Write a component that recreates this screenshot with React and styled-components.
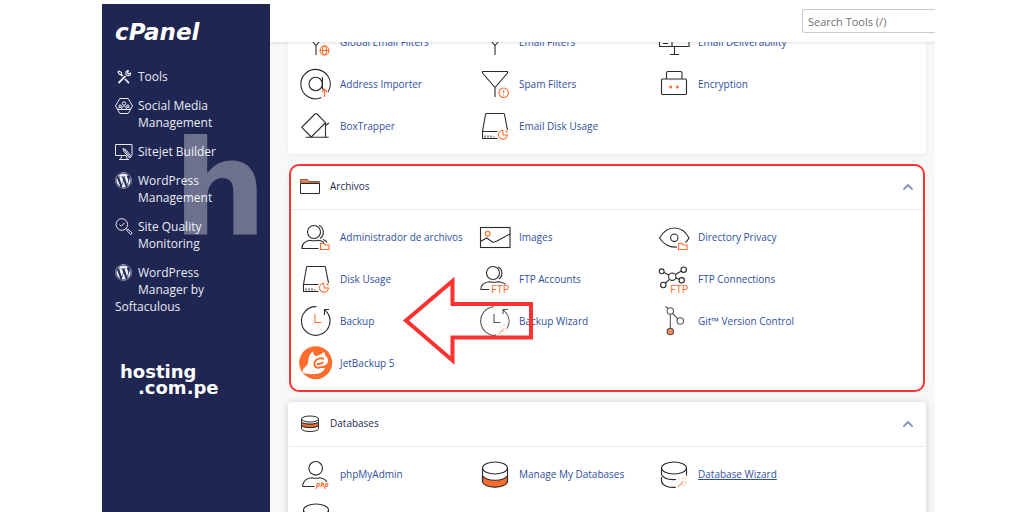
import React from 'react';
import styled, { createGlobalStyle } from 'styled-components';
import { ChevronUp } from 'lucide-react';
import { FaWordpress } from 'react-icons/fa';

const GlobalStyle = createGlobalStyle`
  :root {
    --navy: #1f2652;
    --ink: #2b2b2b;
    --orange: #ff6c2c;
    --link: #2f4f9f;
    --mark: #ff3131;
  }
  * {
    box-sizing: border-box;
  }
  body {
    margin: 0;
    background: #ffffff;
    font-family: "Open Sans", "Noto Sans", sans-serif;
  }
`;

/* tool icons, all on a 34px grid */

const Funnel = () => <path d="M4.500 6V4.500h25V6L17 20.500 4.500 6M17 20.500v9.500" />;

const FolderBadge = () => (
  <path className="accent" d="M21.500 29.500v-6h3.500l1 1.500h4v4.500z" />
);

const WandBadge = () => (
  <g className="accent" strokeWidth="1">
    <path d="M20.500 30l6-6" />
    <path
      strokeDasharray="1 1.500"
      d="M22 22.500l1.500 1.500M26 20.500v2M29.500 21l-1.500 1.500M28 25.500h2.500M27.500 28l1.500 1.500M25 27v2"
    />
  </g>
);

const User = () => (
  <g>
    <circle cx="15" cy="12" r="6.500" />
    <path d="M20 5.500c5 2 6 9.500 1 13M24 19.500c2 .5 3.500 1.500 4 3" />
    <path d="M19.500 28.500H3c-.5-5 4-8 8.500-8.300 3 .8 5 .8 8 0 2.500.2 4 1 5.500 2.300" />
  </g>
);

const Disk = () => (
  <g>
    <path d="M19.500 22.500h-15v7h15M4.500 22.500L7.500 5.500q.2-1 1-1h17q.8 0 1 1l3 15.500" />
    <path d="M7 28.500v-2M10 28.500v-2M13 28.500v-2M16 28.500v-1" />
    <path className="accent" d="M24.500 21.200a4.500 4.500 0 1 0 5 4.800h-4.200zM27.500 21.500l2 2" />
  </g>
);

const Ftp = () => (
  <text className="label" x="13" y="31" fontSize="11">FTP</text>
);

const ICONS = {
  globalFilters: (
    <g>
      <Funnel />
      <g className="accent">
        <circle cx="25.500" cy="25.500" r="4.500" />
        <ellipse cx="25.500" cy="25.500" rx="2" ry="4.500" />
        <path d="M21 25.500h9" />
      </g>
    </g>
  ),
  filters: <Funnel />,
  deliverability: (
    <g>
      <path d="M2.500 21.500v-17H32v17zM15 4.500v17M6 18.500h5M17.500 21.500v8M13 29.500h9" />
    </g>
  ),
  address: (
    <g>
      <path d="M22.500 30.600a14.700 14.700 0 1 1 6.500-5.600" />
      <circle cx="16.700" cy="17" r="6.700" />
      <path d="M23.400 10v10.500c0 1.500 1 2.500 2.500 2" />
      <path className="accent" d="M25.500 30v-7.500M22.800 25l2.700-2.700 2.700 2.700" />
    </g>
  ),
  spam: (
    <g>
      <Funnel />
      <g className="accent">
        <circle cx="25.700" cy="25.700" r="4.700" />
        <path d="M25.700 23v3M25.700 27.500v1" />
      </g>
    </g>
  ),
  encryption: (
    <g>
      <rect x="4.500" y="12" width="25" height="15.500" rx="1" />
      <path d="M9.500 12V6q0-1.500 1.500-1.500h12.500q1.500 0 1.500 1.500v6" />
      <circle className="fill" cx="13.700" cy="20" r="1.500" />
      <circle className="fill" cx="20.300" cy="20" r="1.500" />
    </g>
  ),
  boxtrapper: (
    <path d="M12.300 28L2.700 18.300 16 5q1-1 2 0l8.500 8.700zM6.700 28.200h23M26.500 13.700v14.500M26.500 16.500l3.500-2.500" />
  ),
  disk: <Disk />,
  userFolder: (
    <g>
      <User />
      <FolderBadge />
    </g>
  ),
  images: (
    <g>
      <rect x="2.500" y="7.500" width="29.500" height="20" />
      <path d="M2.500 21.500l6.200-3.500 6.300 4.500 4-1.500 13-7" />
      <circle className="accent" cx="9.700" cy="13.800" r="2.400" />
    </g>
  ),
  eye: (
    <g>
      <path d="M20 27c-7.500 1-14-3.500-17.500-9C6 12 11 8 17.300 8S29 12 32 18c-1 1.800-2 3-3.500 4.500" />
      <circle cx="17.300" cy="17.700" r="3.700" />
      <FolderBadge />
    </g>
  ),
  userFtp: (
    <g>
      <circle cx="15" cy="11" r="6.500" />
      <path d="M20 5c4.500 2 5.500 8.500 1 12M11 27.500H3c-.5-5 4-7.500 8.500-7.800 3 .8 5 .8 8 0 4 .2 6.500 1 8 2.800" />
      <Ftp />
    </g>
  ),
  network: (
    <g>
      <circle cx="15.300" cy="14.700" r="3.700" />
      <circle cx="4.700" cy="9.300" r="2.400" />
      <circle cx="26.700" cy="7.700" r="2.700" />
      <circle cx="24.700" cy="18.300" r="2.700" />
      <circle cx="6.300" cy="23" r="2.700" />
      <path d="M7 10.500l5 2.500M24.300 9l-5.800 3.500M18.800 16l3.400 1.300M12.500 17.300l-4 3.700" />
      <Ftp />
    </g>
  ),
  backup: (
    <g>
      <path d="M17.500 2.700a14.300 14.300 0 1 0 10.500 5.500M25.500 11V5.500h4.500M25.500 5.500l3.500 4" />
      <path className="accent" d="M16 10v8.500h6.500" />
    </g>
  ),
  backupWizard: (
    <g opacity="0.8">
      <path d="M16 2.700a14.300 14.300 0 1 0 2 28.600M29 24.500a14.300 14.300 0 0 0-1-16M25 10V5.500h5M25 5.500l4 4.500" />
      <path d="M16 10v8.500h6.500" />
      <WandBadge />
    </g>
  ),
  git: (
    <g strokeOpacity="0.8">
      <path d="M8.500 2.500l2.500 2M15.500 9.500l5.300 5.300M13.300 10.200v14" />
      <circle cx="13.300" cy="7" r="3.200" />
      <circle cx="23.300" cy="17" r="3.200" />
      <circle cx="13.300" cy="27.500" r="3.200" fill="#ff8a5a" />
    </g>
  ),
  jetbackup: (
    <g stroke="none">
      <circle cx="16.700" cy="16.700" r="16.500" fill="#ff6c2c" />
      <path
        fill="#ffffff"
        d="M13.500 5.500l2.700 4.500c2.500-.3 5-.8 7-2.800 1-.8 2-1.500 2.500-.5l.5 3c2 1 3 3 2.800 5.500-.3 3-2.500 4.300-5.500 4.800l-5 .7c1.500 1.800 4.500 1.500 7.500 1-1.500 4-5 6-9 6.300-4.500.3-9 .3-12.500-1-1.500-1-1-3.500.5-5 2-1.500 3.500-3 4-5.500.6-3.500 1-8 4.500-11z"
      />
      <path
        fill="none"
        stroke="#ff6c2c"
        strokeWidth="2"
        d="M25 13c-3-1.500-8-.5-9.300 3-1 3.500 1 6 4.500 6M18 18c2.500.3 5-.3 6-2"
      />
    </g>
  ),
  userPhp: (
    <g>
      <circle cx="16.700" cy="11.300" r="6.800" />
      <path d="M15.500 29.500H4.500q-1 0-.8-1.500c1-4.500 5-7 9.300-7.300 2.500.7 5 .7 7.500 0 3.500.3 6 1.800 7.500 4.300" />
      <text className="label php" x="17" y="29.500" fontSize="7">php</text>
    </g>
  ),
  database: (
    <g>
      <path fill="#ff6c2c" d="M4.500 18c1.500 7 23.500 7 25 0v6.500c-1.500 7.500-23.500 7.500-25 0z" />
      <ellipse cx="17" cy="11" rx="12.500" ry="6" />
      <path d="M4.500 11v14M29.500 11v14" />
    </g>
  ),
  databaseWizard: (
    <g>
      <ellipse cx="17" cy="11" rx="12.500" ry="6" />
      <path d="M4.500 11v6.500c1.500 3.500 7 5.500 14.500 5M4.500 20v4.500c1 4 7 6.500 14.500 5.800M29.500 11v7.500" />
      <WandBadge />
    </g>
  ),
};

const WORDPRESS = <FaWordpress size={17} />;

const NAV = [
  {
    lines: ['Tools'],
    icon: (
      <svg width="18" height="18" viewBox="0 0 18 18" fill="none" stroke="currentColor">
        <path strokeWidth="1.800" d="M3.500 15l7-7M10 11l4 4.200M6 6.500l1.500 1.500" />
        <path strokeWidth="1.200" d="M15.500 5l-2 1-1-1 .8-2.300c-1.800 0-2.800 1.500-2.300 3.300l1 1.500c2.300.8 4-.5 3.500-2.500zM3 4l1-1 2.500 1.500v2H4.500z" />
      </svg>
    ),
  },
  {
    lines: ['Social Media', 'Management'],
    icon: (
      <svg width="18" height="18" viewBox="0 0 18 18" fill="none" stroke="currentColor">
        <path d="M4.800 1.500h8.400L17.500 9l-4.300 7.500H4.800L.5 9z" />
        <circle cx="9" cy="6.500" r="1.700" />
        <circle cx="5.200" cy="9" r="1.200" />
        <circle cx="12.800" cy="9" r="1.200" />
        <path d="M6.500 12.500c0-4.500 5-4.500 5 0zM3 12.500c0-2 1.500-2.300 3-2M15 12.500c0-2-1.500-2.300-3-2M3 12.500h12" />
      </svg>
    ),
  },
  {
    lines: ['Sitejet Builder'],
    icon: (
      <svg width="18" height="18" viewBox="0 0 18 18" fill="none" stroke="currentColor">
        <path d="M11 12.500H.5v-11h16.500v11M7 12.500l-1.500 4M11 12.500l1.500 4M4 16.500h10" />
        <path d="M8 5.500l1 3 5.500 6.500 2-1.500L11 7z" />
        <path d="M9.500 7l6 7.500" />
      </svg>
    ),
  },
  { lines: ['WordPress', 'Management'], icon: WORDPRESS },
  {
    lines: ['Site Quality', 'Monitoring'],
    icon: (
      <svg width="18" height="18" viewBox="0 0 18 18" fill="none" stroke="currentColor">
        <circle cx="6.800" cy="6.500" r="5.800" />
        <path d="M4.500 6.500l1.800 1.800 3.200-3.500M11 10.500l1.500 1.200M11.800 12.300l1.200-1.200 4.200 4-1.500 1.600z" />
      </svg>
    ),
  },
  { lines: ['WordPress', 'Manager by'], tail: 'Softaculous', icon: WORDPRESS },
];

const EMAIL = [
  ['globalFilters', 'Global Email Filters'],
  ['filters', 'Email Filters'],
  ['deliverability', 'Email Deliverability'],
  ['address', 'Address Importer'],
  ['spam', 'Spam Filters'],
  ['encryption', 'Encryption'],
  ['boxtrapper', 'BoxTrapper'],
  ['disk', 'Email Disk Usage'],
];

const FILES = [
  ['userFolder', 'Administrador de archivos'],
  ['images', 'Images'],
  ['eye', 'Directory Privacy'],
  ['disk', 'Disk Usage'],
  ['userFtp', 'FTP Accounts'],
  ['network', 'FTP Connections'],
  ['backup', 'Backup'],
  ['backupWizard', 'Backup Wizard'],
  ['git', 'Git™ Version Control'],
  ['jetbackup', 'JetBackup 5'],
];

const DATABASES = [
  ['userPhp', 'phpMyAdmin'],
  ['database', 'Manage My Databases'],
  ['databaseWizard', 'Database Wizard', true],
  ['databaseWizard', ''],
];

function ToolGrid({ tools }) {
  return (
    <Grid>
      {tools.map(([icon, name, active]) => (
        <Tool key={name}>
          <ToolIcon viewBox="0 0 34 34" aria-hidden="true">{ICONS[icon]}</ToolIcon>
          {name && <ToolLink href="#" $active={active}>{name}</ToolLink>}
        </Tool>
      ))}
    </Grid>
  );
}

function SectionHeader({ icon, title }) {
  return (
    <Header>
      {icon}
      <Title>{title}</Title>
      <Toggle type="button" aria-label={`Collapse ${title}`}>
        <ChevronUp size={16} strokeWidth={3} />
      </Toggle>
    </Header>
  );
}

export default function App() {
  return (
    <Page>
      <GlobalStyle />
      <Sidebar>
        <Brand>cPanel</Brand>
        <Nav>
          {NAV.map((item) => (
            <NavItem key={item.lines.join(' ')} href="#">
              <NavIcon>{item.icon}</NavIcon>
              <span>
                {item.lines.map((line) => (
                  <NavLine key={line}>{line}</NavLine>
                ))}
              </span>
              {item.tail && <NavTail>{item.tail}</NavTail>}
            </NavItem>
          ))}
        </Nav>
        <HostLogo>
          <span>hosting</span>
          <HostDomain>.com.pe</HostDomain>
        </HostLogo>
        <Watermark aria-hidden="true">h</Watermark>
      </Sidebar>
      <Main>
        <TopBar>
          <Search type="search" aria-label="Search Tools" placeholder="Search Tools (/)" />
        </TopBar>
        <Sections>
          <Card>
            <ToolGrid tools={EMAIL} />
          </Card>
          <Card $marked>
            <SectionHeader
              title="Archivos"
              icon={
                <svg width="20" height="20" viewBox="0 0 20 20">
                  <path fill="#e8875a" stroke="#8a5a48" d="M.5 7V3.500h7l1.500 2h10.500V7z" />
                  <path fill="#ffffff" stroke="#2b2b2b" d="M.5 7.500h19v10H.5z" />
                </svg>
              }
            />
            <ToolGrid tools={FILES} />
            <Arrow viewBox="0 0 140 98" aria-hidden="true">
              <path d="M6 48.500L52.500 9v23H131v33.500H52.500v23z" />
            </Arrow>
          </Card>
          <Card $raised>
            <SectionHeader
              title="Databases"
              icon={
                <svg width="20" height="20" viewBox="0 0 20 20" fill="none" stroke="#2b2b2b">
                  <path d="M1.500 12c0 3.300 17 3.300 17 0v3.500c0 4-17 4-17 0z" />
                  <path fill="#ff6c2c" d="M1.500 8.500c0 3.300 17 3.300 17 0V12c0 3.300-17 3.300-17 0z" />
                  <path fill="#ffffff" d="M1.500 6v2.500c0 3.300 17 3.300 17 0V6" />
                  <ellipse cx="10" cy="6" rx="8.500" ry="3" fill="#ffffff" />
                </svg>
              }
            />
            <ToolGrid tools={DATABASES} />
          </Card>
        </Sections>
      </Main>
    </Page>
  );
}

const Page = styled.div`
  display: flex;
  height: 100vh;
  padding: 4px 89px 0 102px;
  overflow: hidden;
`;

const Sidebar = styled.aside`
  position: relative;
  z-index: 2;
  flex: 0 0 168px;
  padding: 14px 13px;
  background: var(--navy);
  color: #ffffff;
`;

const Brand = styled.div`
  font: italic bold 23px/28px "DejaVu Sans", sans-serif;
`;

const Nav = styled.nav`
  display: flex;
  flex-direction: column;
  gap: 12px;
  padding-top: 22px;
`;

const NavItem = styled.a`
  display: grid;
  grid-template-columns: 18px 1fr;
  column-gap: 5px;
  color: #e9ebf4;
  font-size: 12px;
  line-height: 17px;
  text-decoration: none;
`;

const NavIcon = styled.span`
  display: flex;
  height: 17px;
  align-items: center;
`;

const NavLine = styled.span`
  display: block;
`;

const NavTail = styled.span`
  grid-column: 1 / -1;
`;

const HostLogo = styled.div`
  display: flex;
  flex-direction: column;
  padding: 49px 0 0 5px;
  font: bold 18px/16px "DejaVu Sans", sans-serif;
`;

const HostDomain = styled.span`
  padding-left: 18px;
`;

const Watermark = styled.span`
  position: absolute;
  top: 112px;
  left: 71px;
  color: rgba(255, 255, 255, 0.35);
  font: bold 132px/144px "DejaVu Sans", sans-serif;
  pointer-events: none;
`;

const Main = styled.main`
  display: flex;
  flex: 1;
  flex-direction: column;
  min-width: 0;
  overflow: hidden;
  background: #f8f8f8;
`;

const TopBar = styled.header`
  position: relative;
  z-index: 1;
  display: flex;
  flex: 0 0 38px;
  align-items: center;
  justify-content: flex-end;
  padding-bottom: 4px;
  background: #ffffff;
  box-shadow: 0 1px 3px rgba(0, 0, 0, 0.12);
`;

const Search = styled.input`
  width: 133px;
  height: 24px;
  padding: 0 5px;
  border: 1px solid #c9c9d6;
  border-right: none;
  border-radius: 3px 0 0 3px;
  outline: none;
  background: #ffffff;
  color: #555555;
  font: 11px "Open Sans", sans-serif;
  &::placeholder {
    color: #707070;
    opacity: 1;
  }
`;

/* the list is scrolled, so its first row is half under the top bar */
const Sections = styled.div`
  display: flex;
  flex-direction: column;
  gap: 11px;
  margin-top: -28px;
  padding: 0 9px 0 18px;
`;

const Card = styled.section`
  position: relative;
  border: 1px solid #ffffff;
  border-radius: ${(p) => (p.$marked ? '10px' : '3px')};
  background: #ffffff;
  box-shadow: ${(p) => (p.$raised ? '0 1px 8px rgba(0, 0, 0, 0.18)' : '0 1px 5px rgba(0, 0, 0, 0.05)')};
  &::after {
    content: "";
    display: ${(p) => (p.$marked ? 'block' : 'none')};
    position: absolute;
    inset: -2px 0;
    border: 2px solid var(--mark);
    border-radius: 10px;
    pointer-events: none;
  }
`;

const Header = styled.div`
  display: flex;
  align-items: center;
  gap: 10px;
  height: 44px;
  padding: 0 9px 4px 11px;
  border-bottom: 1px solid #eaedf5;
`;

const Title = styled.h2`
  flex: 1;
  margin: 0;
  color: #1d2c4d;
  font-size: 10px;
  font-weight: 500;
`;

const Toggle = styled.button`
  display: flex;
  padding: 2px 0 0;
  border: none;
  background: none;
  color: #8f96bd;
  cursor: pointer;
`;

const Grid = styled.div`
  display: grid;
  grid-template-columns: repeat(3, 1fr);
  grid-auto-rows: 42px;
  padding: 6px 89px 6px 10px;
`;

const Tool = styled.div`
  display: flex;
  align-items: center;
  gap: 7px;
  min-width: 0;
`;

const ToolIcon = styled.svg`
  flex: 0 0 34px;
  height: 34px;
  fill: none;
  stroke: var(--ink);
  stroke-width: 1.1;
  .accent {
    stroke: var(--orange);
  }
  .fill {
    fill: var(--orange);
    stroke: none;
  }
  .label {
    fill: var(--orange);
    stroke: none;
  }
  .php {
    font-style: italic;
    font-weight: 700;
  }
`;

const ToolLink = styled.a`
  color: var(--link);
  font-size: 10px;
  text-decoration: ${(p) => (p.$active ? 'underline' : 'none')};
  white-space: nowrap;
`;

const Arrow = styled.svg`
  position: absolute;
  top: 106px;
  left: 111px;
  width: 140px;
  height: 98px;
  fill: none;
  stroke: var(--mark);
  stroke-width: 4;
  stroke-miterlimit: 10;
  pointer-events: none;
`;
